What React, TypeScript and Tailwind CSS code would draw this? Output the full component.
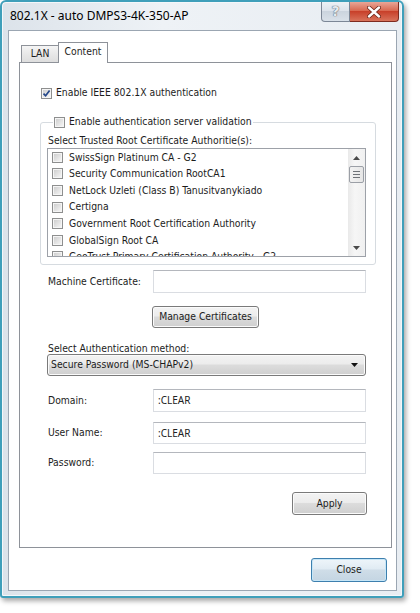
import React from 'react';

const certs = [
  'SwissSign Platinum CA - G2',
  'Security Communication RootCA1',
  'NetLock Uzleti (Class B) Tanusitvanykiado',
  'Certigna',
  'Government Root Certification Authority',
  'GlobalSign Root CA',
  'GeoTrust Primary Certification Authority - G2',
];

function CheckBox({ checked = false }: { checked?: boolean }) {
  return (
    <span className="relative flex size-[11px] shrink-0 items-center justify-center border border-[#8e8f8f] bg-[#f5f5f5]">
      <span className="size-[7px] bg-gradient-to-br from-[#cfcfcf] to-[#f4f4f4]" />
      {checked && (
        <svg viewBox="0 0 9 9" className="absolute left-0 top-0 size-[9px]">
          <path d="M1.5 4.6 L3.6 6.8 L7.6 1.4" fill="none" stroke="#24478a" strokeWidth="1.7" />
        </svg>
      )}
    </span>
  );
}

function TextBox({ value = '', h = 'h-[23px]' }: { value?: string; h?: string }) {
  return (
    <div
      className={
        'flex w-[213px] items-center border border-[#dadde2] border-t-[#b4b7bd] bg-white pl-[4px] font-[\'Noto_Sans\',sans-serif] text-[10px] text-[#222] ' +
        h
      }
    >
      {value}
    </div>
  );
}

function Button({ label, className }: { label: string; className: string }) {
  return (
    <div
      className={
        'flex items-center justify-center rounded-[3px] border border-[#7a7a7a] bg-[linear-gradient(#f3f3f3,#ececec_45%,#dcdcdc_50%,#cfcfcf)] shadow-[inset_0_0_0_1px_#fbfbfb] ' +
        className
      }
    >
      {label}
    </div>
  );
}

function FieldRow({ label, value, className, h }: { label: string; value?: string; className: string; h?: string }) {
  return (
    <div className={'flex items-center pl-[28px] ' + className}>
      <span className="w-[105px]">{label}</span>
      <TextBox value={value} h={h} />
    </div>
  );
}

function CertList() {
  return (
    <div className="flex h-[109px] w-[319px] border border-[#9da1a8] bg-white">
      <div className="flex-1 overflow-hidden">
        {certs.map((name) => (
          <div key={name} className="flex h-[16.6px] items-center gap-[6px] pl-[4px] whitespace-nowrap">
            <CheckBox />
            <span>{name}</span>
          </div>
        ))}
      </div>
      {/* vertical scrollbar */}
      <div className="flex w-[17px] flex-col items-center bg-[linear-gradient(90deg,#e9e9e9,#f6f6f6_40%,#f0f0f0)]">
        <div className="flex h-[17px] w-full items-center justify-center">
          <svg viewBox="0 0 7 4" className="h-[4px] w-[7px]">
            <path d="M0 4 L3.5 0 L7 4 Z" fill="#4a4a4a" />
          </svg>
        </div>
        <div className="flex h-[17px] w-[15px] flex-col items-center justify-center gap-[2px] rounded-[2px] border border-[#9b9fa6] bg-[linear-gradient(90deg,#f2f2f2,#e6e6e6)]">
          <span className="h-px w-[7px] bg-[#6f7378]" />
          <span className="h-px w-[7px] bg-[#6f7378]" />
          <span className="h-px w-[7px] bg-[#6f7378]" />
        </div>
        <div className="flex-1" />
        <div className="flex h-[17px] w-full items-center justify-center">
          <svg viewBox="0 0 7 4" className="h-[4px] w-[7px]">
            <path d="M0 0 L3.5 4 L7 0 Z" fill="#4a4a4a" />
          </svg>
        </div>
      </div>
    </div>
  );
}

function ContentTab() {
  return (
    <div className="flex flex-1 flex-col border border-[#8e9299] bg-white">
      <div className="ml-[21px] mt-[23px] flex h-[14px] items-center gap-[4px]">
        <CheckBox checked />
        <span>Enable IEEE 802.1X authentication</span>
      </div>

      <fieldset className="ml-[20px] mt-[15px] w-[336px] rounded-[3px] border border-[#d6dbe0] pb-[7px] pl-[6px]">
        <legend className="ml-[6px] flex h-[14px] items-center gap-[4px] px-[1px]">
          <CheckBox />
          <span>Enable authentication server validation</span>
        </legend>
        <div className="mt-[5px] h-[13px] pl-[1px] leading-[13px]">Select Trusted Root Certificate Authoritie(s):</div>
        <div className="mt-px">
          <CertList />
        </div>
      </fieldset>

      <FieldRow label="Machine Certificate:" className="mt-[5px]" />

      <Button label="Manage Certificates" className="ml-[132px] mt-[13px] h-[22px] w-[107px]" />

      <div className="ml-[28px] mt-[14px] h-[12px] leading-[12px]">Select Authentication method:</div>
      <div className="ml-[27px] flex h-[22px] w-[319px] items-center justify-between rounded-[3px] border border-[#7a7a7a] bg-[linear-gradient(#f3f3f3,#ececec_45%,#dcdcdc_50%,#cfcfcf)] pl-[3px] pr-[7px] shadow-[inset_0_0_0_1px_#fbfbfb]">
        <span>Secure Password (MS-CHAPv2)</span>
        <svg viewBox="0 0 7 4" className="h-[4px] w-[7px]">
          <path d="M0 0 L3.5 4 L7 0 Z" fill="#111" />
        </svg>
      </div>

      <FieldRow label="Domain:" value=":CLEAR" className="mt-[13px]" />
      <FieldRow label="User Name:" value=":CLEAR" className="mt-[10px]" h="h-[22px]" />
      <FieldRow label="Password:" className="mt-[8px]" h="h-[22px]" />

      <div className="mr-[24px] mt-[18px] flex justify-end">
        <Button label="Apply" className="h-[23px] w-[75px]" />
      </div>
    </div>
  );
}

export default function App() {
  return (
    <div className="h-[613px] w-[420px] bg-white font-['DejaVu_Sans_Condensed','DejaVu_Sans',sans-serif] text-[10.3px] text-[#1c1c1c]">
      <div className="flex h-[598px] w-[404px] flex-col rounded-t-[6px] rounded-b-[3px] border-2 border-[#3f9fba] bg-[linear-gradient(90deg,#dce3ea,#eef2f6_40%,#e8edf2)] shadow-[inset_0_0_0_1px_#f4f7fa,2px_3px_5px_rgba(0,0,0,0.35)]">
        {/* title bar */}
        <div className="flex h-[28px] items-start">
          <div className="flex-1 pl-[8px] pt-[5px] font-['Noto_Sans',sans-serif] text-[12px] leading-[18px] text-black">
            802.1X - auto DMPS3-4K-350-AP
          </div>
          <div className="mr-[3px] flex">
            <div className="flex h-[20px] w-[29px] items-center justify-center rounded-bl-[4px] border border-t-0 border-[#7c8796] bg-[linear-gradient(#edf1f5,#dbe2ea_50%,#cbd4de_50%,#d9e1e9)] font-['DejaVu_Sans',sans-serif] text-[14px] font-bold text-[#e6eaee] [text-shadow:0_0_1px_#4f5968,0_0_1px_#4f5968]">
              ?
            </div>
            <div className="flex h-[20px] w-[49px] items-center justify-center rounded-br-[4px] border border-l-0 border-t-0 border-[#7e2b1f] bg-[linear-gradient(#e9a697,#d96a52_45%,#c8402a_50%,#d8735b)]">
              <svg viewBox="0 0 14 12" className="h-[12px] w-[14px]">
                <path d="M2 1.5 L12 10.5 M12 1.5 L2 10.5" stroke="#6b2418" strokeWidth="4" strokeLinecap="round" />
                <path d="M2 1.5 L12 10.5 M12 1.5 L2 10.5" stroke="#ffffff" strokeWidth="2.4" strokeLinecap="round" />
              </svg>
            </div>
          </div>
        </div>

        {/* client area */}
        <div className="mb-[5px] ml-[6px] mr-[5px] flex flex-1 flex-col border border-[#9ba6b2] bg-white pl-[10px] pr-[4px] pt-[11px]">
          <div className="flex h-[20px] items-end">
            <div className="ml-[2px] flex h-[17px] w-[37px] items-center justify-center border border-b-0 border-r-0 border-[#8e9299] bg-[linear-gradient(#f5f5f5,#e8e8e8_50%,#dedede)]">
              LAN
            </div>
            <div className="relative z-10 -mb-px flex h-[21px] w-[50px] items-center justify-center border border-b-0 border-[#8e9299] bg-white pb-[2px]">
              Content
            </div>
          </div>
          <ContentTab />
          <div className="flex justify-end pb-[8px] pr-[5px] pt-[10px]">
            <div className="flex h-[24px] w-[76px] items-center justify-center rounded-[3px] border border-[#3d7fae] bg-[linear-gradient(#eef5fa,#e0ebf3_45%,#cfdde8_50%,#c4d5e2)] shadow-[inset_0_0_0_1px_#c6e6f7]">
              Close
            </div>
          </div>
        </div>
      </div>
    </div>
  );
}
